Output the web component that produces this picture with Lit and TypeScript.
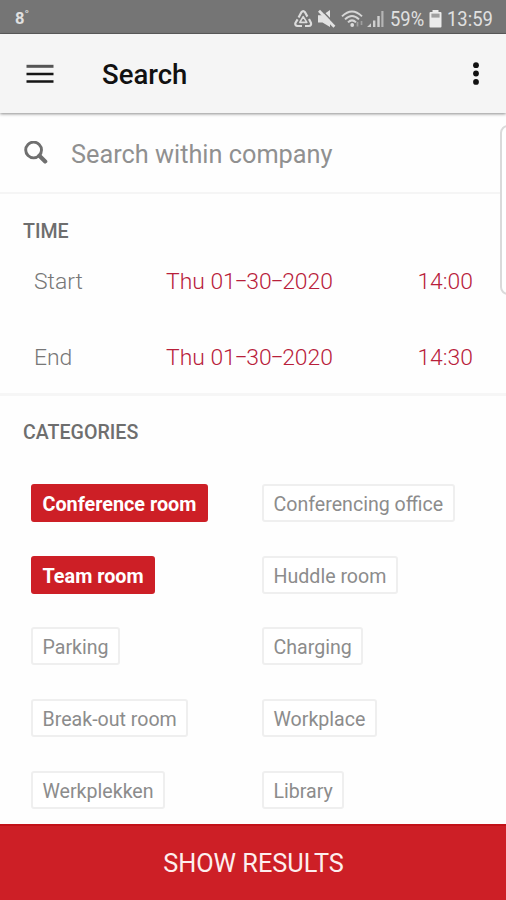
import { LitElement, html, css } from "lit";
import { customElement, property } from "lit/decorators.js";

@customElement("status-bar")
class StatusBar extends LitElement {
  static styles = css`
    :host {
      display: flex;
      flex: none;
      align-items: center;
      justify-content: space-between;
      box-sizing: border-box;
      height: 34px;
      padding: 4px 14px 0 15px;
      background: #757575;
      border-bottom: 1px solid #5f5f5f;
      color: #e0e0e0;
      font-size: 20px;
    }
    .temp {
      font-size: 16.5px;
      font-weight: 700;
      display: flex;
      align-items: flex-start;
    }
    .deg {
      font-size: 14px;
      line-height: 14px;
    }
    .tray {
      display: flex;
      align-items: center;
    }
    .percent {
      width: 34px;
      margin: 0 5px 0 6px;
      font-size: 20px;
    }
    .squeeze {
      display: inline-block;
      transform-origin: 0 50%;
      transform: scaleX(0.92);
      white-space: nowrap;
    }
    .clock {
      width: 45px;
      margin-left: 5px;
    }
    svg {
      display: block;
    }
  `;
  render() {
    return html`
      <div class="temp">8<span class="deg">˚</span></div>
      <div class="tray">
        <svg width="90" height="22" viewBox="0 0 90 22">
          <g fill="none" stroke="#dcdcdc" stroke-width="2.2" stroke-linejoin="round">
            <path d="M4.6 9.6 L7.4 4.3 Q9.2 2.1 11 4.3 L13.4 8.6" />
            <path d="M3.6 11.4 L1.4 15 Q0.8 17.8 3.6 18 H8" />
            <path d="M15 11 L17 15 Q17.6 17.8 14.8 18 H11" />
            <path d="M5.8 14.4 H12.8 L9.2 8.6 Z" stroke-width="1.6" />
          </g>
          <path d="M24 7.2 H28.5 L36 2 V19 L28.5 14.4 H24 Z" fill="#e2e2e2" />
          <path d="M27 1.6 L42 17.2" stroke="#757575" stroke-width="1.6" />
          <path d="M25 2.8 L40.4 18.8" stroke="#e2e2e2" stroke-width="2.8" />
          <g fill="none" stroke="#d6d6d6" stroke-width="2">
            <path d="M48 8.4 Q58 -1.4 68 8.4" />
            <path d="M51 11.4 Q58 4.6 65 11.4" />
            <path d="M54 14.4 Q58 10.4 62 14.4" />
          </g>
          <circle cx="58.2" cy="17" r="1.9" fill="#dcdcdc" />
          <path d="M63.5 14 v4.5 M67.5 17 v-4" stroke="#a0a0a0" stroke-width="1.7" />
          <path d="M73 19 L77 15.3 V19 Z M79 12.5 h2.4 V19 h-2.4 Z M83.3 8 h2.4 V19 h-2.4 Z" fill="#d0d0d0" />
          <path d="M87.3 3 h2.2 V19 h-2.2 Z" fill="#b5b5b5" />
        </svg>
        <div class="percent"><span class="squeeze">59%</span></div>
        <svg class="battery" width="13" height="20" viewBox="0 0 13 20">
          <path d="M3.5 1 H9.5 V3 H11.5 Q12.5 3 12.5 4 V17.5 Q12.5 18.5 11.5 18.5 H1.5 Q0.5 18.5 0.5 17.5 V4 Q0.5 3 1.5 3 H3.5 Z" fill="#ececec" />
          <path d="M2.4 4.6 H10.6 V8.6 H2.4 Z" fill="#a0a0a0" />
        </svg>
        <div class="clock"><span class="squeeze">13:59</span></div>
      </div>
    `;
  }
}

@customElement("category-chip")
class CategoryChip extends LitElement {
  @property() label = "";
  @property({ type: Boolean, reflect: true }) selected = false;
  static styles = css`
    :host {
      display: block;
      justify-self: start;
      box-sizing: border-box;
      height: 38px;
      padding: 0 9.5px;
      border: 2px solid #efefef;
      border-radius: 3px;
      background: #fff;
      color: #8c8c8c;
      font-size: 19.6px;
      line-height: 37px;
      white-space: nowrap;
    }
    :host([selected]) {
      background: #cd1f26;
      border-color: #cd1f26;
      color: #fff;
      font-weight: 700;
      font-size: 19.8px;
    }
  `;
  render() {
    return html`${this.label}`;
  }
}

@customElement("app-root")
class AppRoot extends LitElement {
  static styles = css`
    :host {
      display: flex;
      flex-direction: column;
      position: relative;
      width: 506px;
      height: 900px;
      overflow: hidden;
      background: #fefefe;
      font-family: Roboto, sans-serif;
    }
    .appbar {
      display: flex;
      align-items: center;
      flex: none;
      box-sizing: border-box;
      height: 79px;
      padding: 2px 26px 0;
      background: #f5f5f5;
      box-shadow: 0 1px 3px rgba(0, 0, 0, 0.45);
      z-index: 1;
    }
    .menu,
    .more {
      margin-bottom: 2px;
    }
    .title {
      flex: 1;
      margin-left: 48px;
      font-size: 27.5px;
      font-weight: 500;
      color: #111;
    }
    svg {
      display: block;
      flex: none;
    }
    .search {
      display: flex;
      align-items: center;
      flex: none;
      box-sizing: border-box;
      height: 81px;
      padding: 2px 24px 0;
      border-bottom: 2px solid #f5f5f5;
      font-size: 25.3px;
      color: #909090;
    }
    .hint {
      margin: 2px 0 0 23px;
    }
    .time {
      flex: none;
      box-sizing: border-box;
      height: 202px;
      padding: 25px 33px 0 23px;
      border-bottom: 3px solid #f6f6f6;
    }
    .heading {
      font-size: 19.6px;
      line-height: 26px;
      font-weight: 500;
      color: #6e6e6e;
    }
    .rows {
      margin-top: 12px;
    }
    .row {
      display: grid;
      grid-template-columns: 132px 1fr auto;
      height: 75.5px;
      line-height: 50px;
      padding-left: 11px;
      font-size: 22.9px;
      font-weight: 300;
      color: #777;
    }
    .value {
      color: #b8203a;
    }
    .dash {
      margin: 0 -1.3px;
    }
    .categories {
      flex: 1;
      min-height: 0;
      overflow: hidden;
      box-sizing: border-box;
      padding: 24px 23px 0;
    }
    .chips {
      display: grid;
      grid-template-columns: 231px 1fr;
      grid-auto-rows: 71.7px;
      margin: 38px 0 0 8px;
    }
    .submit {
      flex: none;
      box-sizing: border-box;
      height: 76px;
      border-top: 2px solid #c21118;
      background: #cd1f26;
      color: #fdeeee;
      text-align: center;
      font-size: 25.3px;
      line-height: 76px;
      padding-left: 1px;
    }
    .edge-handle {
      position: absolute;
      top: 125px;
      right: -10px;
      width: 12px;
      height: 166px;
      border: 2px solid #dadada;
      border-radius: 8px;
      background: #fff;
    }
  `;

  private times = [
    { label: "Start", date: ["Thu 01", "30", "2020"], time: "14:00" },
    { label: "End", date: ["Thu 01", "30", "2020"], time: "14:30" },
  ];

  private categories = [
    "Conference room",
    "Conferencing office",
    "Team room",
    "Huddle room",
    "Parking",
    "Charging",
    "Break-out room",
    "Workplace",
    "Werkplekken",
    "Library",
  ];

  private selected = new Set(["Conference room", "Team room"]);

  render() {
    return html`
      <status-bar></status-bar>
      <div class="appbar">
        <svg class="menu" width="28" height="22" viewBox="0 0 28 22">
          <path d="M0.5 3.3 H27.5" stroke="#555" stroke-width="3" />
          <path d="M0.5 11 H27.5 M0.5 18.4 H27.5" stroke="#151515" stroke-width="2.5" />
        </svg>
        <div class="title">Search</div>
        <svg class="more" width="8" height="24" viewBox="0 0 8 24" fill="#111">
          <circle cx="4" cy="3.2" r="2.9" />
          <circle cx="4" cy="11.5" r="2.9" />
          <circle cx="4" cy="19.9" r="2.9" />
        </svg>
      </div>
      <div class="search">
        <svg width="24" height="26" viewBox="0 0 24 26" fill="none" stroke="#6f6f6f">
          <circle cx="9.6" cy="9" r="7.9" stroke-width="2.9" />
          <path d="M15.4 14.8 L21.2 20.4" stroke-width="4.2" stroke-linecap="round" />
        </svg>
        <div class="hint">Search within company</div>
      </div>
      <div class="time">
        <div class="heading">TIME</div>
        <div class="rows">
          ${this.times.map(
            (t) => html`<div class="row">
              <span>${t.label}</span>
              <span class="value"
                >${t.date.map((part, i) => (i ? html`<span class="dash">−</span>${part}` : part))}</span
              >
              <span class="value">${t.time}</span>
            </div>`
          )}
        </div>
      </div>
      <div class="categories">
        <div class="heading">CATEGORIES</div>
        <div class="chips">
          ${this.categories.map(
            (c) => html`<category-chip .label=${c} ?selected=${this.selected.has(c)}></category-chip>`
          )}
        </div>
      </div>
      <div class="submit">SHOW RESULTS</div>
      <div class="edge-handle"></div>
    `;
  }
}
